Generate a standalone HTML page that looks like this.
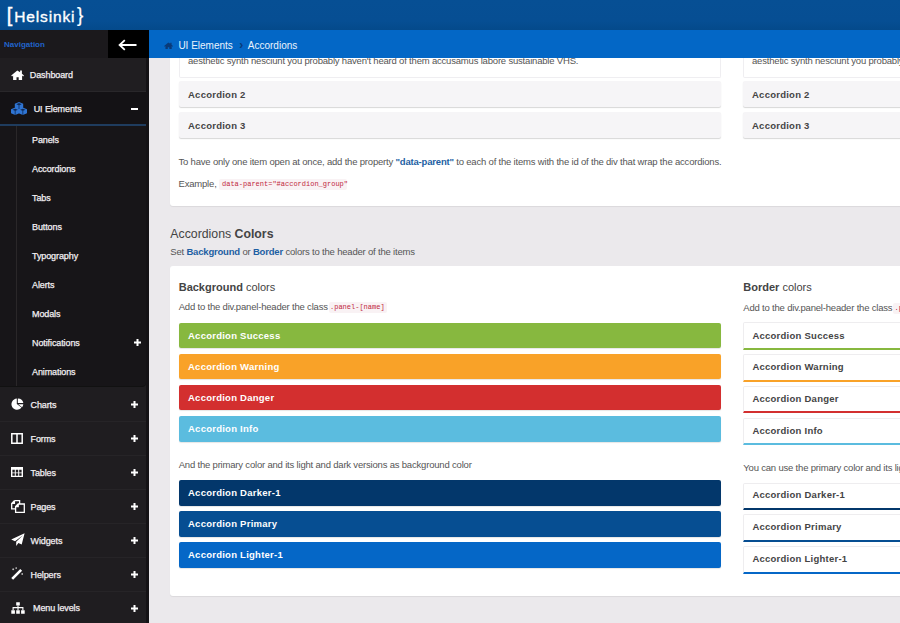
<!DOCTYPE html>
<html><head><meta charset="utf-8">
<style>
*{margin:0;padding:0;box-sizing:border-box}
html,body{width:900px;height:623px;overflow:hidden}
body{font-family:"Liberation Sans",sans-serif;background:#ebe9ec;position:relative;color:#555}
.abs{position:absolute}
.t{position:absolute;white-space:nowrap;color:#555}
.bt{letter-spacing:-0.19px}
.hb{font-weight:bold;color:#444;font-size:9.5px!important;letter-spacing:0.25px}
.mtxt{position:absolute;white-space:nowrap;color:#f2eff2;letter-spacing:-0.1px;-webkit-text-stroke:0.25px #f2eff2}
.logo{color:#fff}
.card{position:absolute;background:#fff;border-radius:3px;box-shadow:0 1px 1px rgba(0,0,0,0.07)}
.ph{position:absolute;border-radius:2px}
.gray{height:26px;background:#f6f5f7;box-shadow:0 1px 1px rgba(0,0,0,0.16)}
.code{font-family:"Liberation Mono",monospace;color:#c7254e;background:#f9f2f4;font-size:7px;padding:2px 2px;border-radius:2px}
.blue{color:#1d5fa3}
.col{box-shadow:0 1px 1px rgba(0,0,0,0.1)}
.bd{background:#fff;border:1px solid #eeedef;border-bottom:2px solid;border-radius:2px 2px 0 0}
</style></head><body>
<!-- top card -->
<div class="card" style="left:170px;top:20px;width:740px;height:186px"></div>
<div class="abs" style="left:179px;top:40px;width:542px;height:38px;background:#fff;border:1px solid #efeef1;border-top:none;border-radius:0 0 2px 2px"></div>
<div class="t bt" style="left:188px;top:55.23px;font-size:9.5px;line-height:12px;">aesthetic synth nesciunt you probably haven't heard of them accusamus labore sustainable VHS.</div>
<div class="ph gray" style="left:179px;top:81px;width:542px"></div>
<div class="t hb" style="left:188px;top:87.62px;font-size:10px;line-height:14px;">Accordion 2</div>
<div class="ph gray" style="left:179px;top:112px;width:542px"></div>
<div class="t hb" style="left:188px;top:118.92px;font-size:10px;line-height:14px;">Accordion 3</div>
<div class="abs" style="left:743px;top:40px;width:200px;height:38px;background:#fff;border:1px solid #efeef1;border-top:none;border-radius:0 0 2px 2px"></div>
<div class="t bt" style="left:752px;top:55.23px;font-size:9.5px;line-height:12px;">aesthetic synth nesciunt you probably haven't heard of them accusamus labore sustainable VHS.</div>
<div class="ph gray" style="left:743px;top:81px;width:200px"></div>
<div class="t hb" style="left:752px;top:87.62px;font-size:10px;line-height:14px;">Accordion 2</div>
<div class="ph gray" style="left:743px;top:112px;width:200px"></div>
<div class="t hb" style="left:752px;top:118.92px;font-size:10px;line-height:14px;">Accordion 3</div>
<div class="t bt" style="left:178.5px;top:155.63px;font-size:9.5px;line-height:12px;">To have only one item open at once, add the property <b class="blue">"data-parent"</b> to each of the items with the id of the div that wrap the accordions.</div>
<div class="t bt" style="left:178.5px;top:178.03px;font-size:9.5px;line-height:12px;">Example,</div>
<div class="abs" style="left:219.4px;top:179px;width:128px;height:11px;background:#f9f2f4;border-radius:2px"></div>
<div class="abs" style="left:222px;top:179px;font-family:'Liberation Mono',monospace;font-size:7px;line-height:11px;color:#c1283e;white-space:nowrap">data-parent="#accordion_group"</div>

<div class="t" style="left:170.3px;top:226.00px;font-size:12.3px;line-height:16px;color:#444">Accordions <b>Colors</b></div>
<div class="t bt" style="left:170.3px;top:245.63px;font-size:9.5px;line-height:12px;">Set <b class="blue">Background</b> or <b class="blue">Border</b> colors to the header of the items</div>

<div class="card" style="left:170px;top:266px;width:740px;height:330px"></div>
<div class="t" style="left:178.7px;top:279.51px;font-size:11px;line-height:14px;color:#444"><b>Background</b> colors</div>
<div class="t bt" style="left:178.7px;top:301.43px;font-size:9.5px;line-height:12px;">Add to the div.panel-header the class</div>
<div class="abs" style="left:328.5px;top:302px;width:58px;height:11px;background:#f9f2f4;border-radius:2px"></div>
<div class="abs" style="left:330px;top:302px;font-family:'Liberation Mono',monospace;font-size:7px;line-height:11px;color:#c1283e;white-space:nowrap">.panel-[name]</div>
<div class="t" style="left:743.3px;top:280.01px;font-size:11px;line-height:14px;color:#444"><b>Border</b> colors</div>
<div class="t bt" style="left:743.3px;top:302.03px;font-size:9.5px;line-height:12px;">Add to the div.panel-header the class</div>
<div class="abs" style="left:893px;top:302.5px;width:58px;height:11px;background:#f9f2f4;border-radius:2px"></div>
<div class="abs" style="left:894.5px;top:302.5px;font-family:'Liberation Mono',monospace;font-size:7px;line-height:11px;color:#c1283e;white-space:nowrap">.panel-[name]</div>
<div class="t bt" style="left:178.7px;top:458.63px;font-size:9.5px;line-height:12px;">And the primary color and its light and dark versions as background color</div>
<div class="t bt" style="left:743.3px;top:461.63px;font-size:9.5px;line-height:12px;">You can use the primary color and its light and dark versions as border color</div>
<div class="ph col" style="left:179px;top:322.5px;width:542px;height:25.5px;background:#87b83f"></div>
<div class="t hb" style="left:188px;top:328.52px;font-size:10px;line-height:14px;color:#fff">Accordion Success</div>
<div class="ph col" style="left:179px;top:353.7px;width:542px;height:25.5px;background:#f9a228"></div>
<div class="t hb" style="left:188px;top:359.72px;font-size:10px;line-height:14px;color:#fff">Accordion Warning</div>
<div class="ph col" style="left:179px;top:384.9px;width:542px;height:25.5px;background:#d32f2f"></div>
<div class="t hb" style="left:188px;top:390.92px;font-size:10px;line-height:14px;color:#fff">Accordion Danger</div>
<div class="ph col" style="left:179px;top:416.1px;width:542px;height:25.5px;background:#5bbcdf"></div>
<div class="t hb" style="left:188px;top:422.12px;font-size:10px;line-height:14px;color:#fff">Accordion Info</div>
<div class="ph col" style="left:179px;top:480px;width:542px;height:25.5px;background:#03376b"></div>
<div class="t hb" style="left:188px;top:486.02px;font-size:10px;line-height:14px;color:#fff">Accordion Darker-1</div>
<div class="ph col" style="left:179px;top:511.2px;width:542px;height:25.5px;background:#064e92"></div>
<div class="t hb" style="left:188px;top:517.23px;font-size:10px;line-height:14px;color:#fff">Accordion Primary</div>
<div class="ph col" style="left:179px;top:542.4px;width:542px;height:25.5px;background:#0567c7"></div>
<div class="t hb" style="left:188px;top:548.43px;font-size:10px;line-height:14px;color:#fff">Accordion Lighter-1</div>
<div class="ph bd" style="left:743px;top:322.3px;width:200px;height:27.6px;border-bottom-color:#87b83f"></div>
<div class="t hb" style="left:752.4px;top:328.52px;font-size:10px;line-height:14px;color:#444">Accordion Success</div>
<div class="ph bd" style="left:743px;top:354.1px;width:200px;height:27.6px;border-bottom-color:#f9a228"></div>
<div class="t hb" style="left:752.4px;top:360.32px;font-size:10px;line-height:14px;color:#444">Accordion Warning</div>
<div class="ph bd" style="left:743px;top:385.9px;width:200px;height:27.6px;border-bottom-color:#d32f2f"></div>
<div class="t hb" style="left:752.4px;top:392.12px;font-size:10px;line-height:14px;color:#444">Accordion Danger</div>
<div class="ph bd" style="left:743px;top:417.7px;width:200px;height:27.6px;border-bottom-color:#5bbcdf"></div>
<div class="t hb" style="left:752.4px;top:423.92px;font-size:10px;line-height:14px;color:#444">Accordion Info</div>
<div class="ph bd" style="left:743px;top:482.7px;width:200px;height:27.6px;border-bottom-color:#03376b"></div>
<div class="t hb" style="left:752.4px;top:488.32px;font-size:10px;line-height:14px;color:#444">Accordion Darker-1</div>
<div class="ph bd" style="left:743px;top:514.4px;width:200px;height:27.6px;border-bottom-color:#064e92"></div>
<div class="t hb" style="left:752.4px;top:520.02px;font-size:10px;line-height:14px;color:#444">Accordion Primary</div>
<div class="ph bd" style="left:743px;top:546.1px;width:200px;height:27.6px;border-bottom-color:#0567c7"></div>
<div class="t hb" style="left:752.4px;top:551.73px;font-size:10px;line-height:14px;color:#444">Accordion Lighter-1</div>

<!-- header & breadcrumb -->
<div class="abs" style="left:0;top:0;width:900px;height:30px;background:linear-gradient(#064f94 0%,#064e93 70%,#044a8b 100%)"></div>
<div class="abs logo" style="left:6.8px;top:3.8px;font-size:20px;line-height:22px;-webkit-text-stroke:0.4px #fff">[</div>
<div class="abs logo" style="left:14.3px;top:7px;font-size:15.5px;line-height:20px;letter-spacing:0.85px;-webkit-text-stroke:0.35px #fff">Helsinki</div>
<div class="abs logo" style="left:77.2px;top:3.8px;font-size:20px;line-height:22px;transform:scaleX(0.95);transform-origin:left;-webkit-text-stroke:0.2px #fff">}</div>

<div class="abs" style="left:0;top:30px;width:149px;height:593px;background:#1f1d20"></div>
<div class="abs" style="left:0;top:30px;width:149px;height:28px;background:#1b191c"></div>
<div class="t" style="left:4px;top:38.86px;font-size:8px;line-height:11px;font-weight:bold;color:#2163c9">Navigation</div>
<div class="abs" style="left:108px;top:30px;width:41px;height:28px;background:#000"></div>
<div class="abs" style="left:118px;top:38.5px;line-height:0"><svg width="19" height="12" viewBox="0 0 19 12"><path d="M18.5 6H2M6.8 1.2L1.6 6l5.2 4.8" fill="none" stroke="#fff" stroke-width="1.8"/></svg></div>

<div class="abs" style="left:0;top:58px;width:146px;height:34px;background:#201e21;border-bottom:1px solid #29272a"></div>
<div class="abs" style="left:10.5px;top:70.2px;line-height:0"><svg width="13" height="10" viewBox="0 0 13 10"><path d="M6.3 0.4L0.2 5.5l0.9 0.9 1-0.8V10h3.4V7.2h2.2V10h3.4V5.6l1 0.8 0.9-0.9-2.1-1.8V0.6H9.1v1.6z" fill="#fff"/></svg></div>
<div class="mtxt" style="left:29.8px;top:68.44px;font-size:9px;line-height:14px;">Dashboard</div>

<div class="abs" style="left:0;top:92px;width:146px;height:34px;background:#141215;border-bottom:2px solid #1f3c5e"></div>
<div class="abs" style="left:10.5px;top:102.4px;line-height:0"><svg width="16" height="13" viewBox="0 0 16 13"><path d="M8 0L12.2 1.6280000000000001V5.6240000000000006L8 7.4L3.8 5.6240000000000006V1.6280000000000001zM4.2 5.6L8.4 7.228V11.224L4.2 13.0L0.0 11.224V7.228zM11.8 5.6L16.0 7.228V11.224L11.8 13.0L7.6000000000000005 11.224V7.228z" fill="#2f74d2"/><path d="M8 1.0360000000000003L10.604 2.22L8 3.4040000000000004L5.396 2.22zM4.2 6.636L6.804 7.82L4.2 9.004L1.596 7.82zM11.8 6.636L14.404 7.82L11.8 9.004L9.196000000000002 7.82z" fill="#0f2c58"/><path d="M8 3.4v3.6M4.2 9v4M11.8 9v4" stroke="#0f2c58" stroke-width="0.8"/></svg></div>
<div class="mtxt" style="left:33.7px;top:102.04px;font-size:9px;line-height:14px;">UI Elements</div>
<div class="abs" style="left:131px;top:108px;width:7px;height:2px;background:#fff"></div>

<div class="abs" style="left:0;top:126px;width:146px;height:260px;background:#171518;border-radius:0 0 4px 0;box-shadow:0 1px 0 #111"></div>
<div class="abs" style="left:16px;top:126px;width:1px;height:260px;background:#2a2729"></div>
<div class="mtxt" style="left:32px;top:132.74px;font-size:9px;line-height:14px;">Panels</div>
<div class="mtxt" style="left:32px;top:161.74px;font-size:9px;line-height:14px;">Accordions</div>
<div class="mtxt" style="left:32px;top:190.74px;font-size:9px;line-height:14px;">Tabs</div>
<div class="mtxt" style="left:32px;top:219.74px;font-size:9px;line-height:14px;">Buttons</div>
<div class="mtxt" style="left:32px;top:248.74px;font-size:9px;line-height:14px;">Typography</div>
<div class="mtxt" style="left:32px;top:277.74px;font-size:9px;line-height:14px;">Alerts</div>
<div class="mtxt" style="left:32px;top:306.74px;font-size:9px;line-height:14px;">Modals</div>
<div class="mtxt" style="left:32px;top:335.74px;font-size:9px;line-height:14px;">Notifications</div>
<div class="mtxt" style="left:32px;top:364.74px;font-size:9px;line-height:14px;">Animations</div>
<div class="abs" style="left:133.5px;top:338.8px;line-height:0"><svg width="7" height="7" viewBox="0 0 7 7"><path d="M3.5 0v7M0 3.5h7" stroke="#fff" stroke-width="2"/></svg></div>
<div class="abs" style="left:10.5px;top:398.4px;line-height:0"><svg width="13" height="12" viewBox="0 0 13 12"><path d="M5.8 0.6A5.6 5.6 0 1 0 10.5 9.6L5.8 6z" fill="#fff"/><path d="M6.8 0.5A5.5 5.5 0 0 1 12.3 5H6.8z" fill="#fff"/><path d="M7.2 6.2h5.1a5.4 5.4 0 0 1-1.2 3z" fill="#fff"/></svg></div>
<div class="mtxt" style="left:30.5px;top:397.94px;font-size:9px;line-height:14px;">Charts</div>
<div class="abs" style="left:131px;top:401.0px;line-height:0"><svg width="7" height="7" viewBox="0 0 7 7"><path d="M3.5 0v7M0 3.5h7" stroke="#fff" stroke-width="2"/></svg></div>
<div class="abs" style="left:0;top:421px;width:146px;height:1px;background:#262427"></div>
<div class="abs" style="left:10.5px;top:432.9px;line-height:0"><svg width="12" height="11" viewBox="0 0 12 11"><path d="M0.8 0.8h10.4v9.4H0.8z M6 0.8v9.4" fill="none" stroke="#fff" stroke-width="1.5"/></svg></div>
<div class="mtxt" style="left:30.5px;top:431.86px;font-size:9px;line-height:14px;">Forms</div>
<div class="abs" style="left:131px;top:434.9px;line-height:0"><svg width="7" height="7" viewBox="0 0 7 7"><path d="M3.5 0v7M0 3.5h7" stroke="#fff" stroke-width="2"/></svg></div>
<div class="abs" style="left:0;top:455px;width:146px;height:1px;background:#262427"></div>
<div class="abs" style="left:10.5px;top:466.8px;line-height:0"><svg width="12" height="10" viewBox="0 0 12 10"><path d="M0 0h12v10H0z" fill="#fff"/><path d="M1.4 2.8h2.4v2.6H1.4zM4.8 2.8h2.4v2.6H4.8zM8.2 2.8h2.4v2.6H8.2zM1.4 6.2h2.4v2.5H1.4zM4.8 6.2h2.4v2.5H4.8zM8.2 6.2h2.4v2.5H8.2z" fill="#1f1d20"/></svg></div>
<div class="mtxt" style="left:30.5px;top:465.78px;font-size:9px;line-height:14px;">Tables</div>
<div class="abs" style="left:131px;top:468.8px;line-height:0"><svg width="7" height="7" viewBox="0 0 7 7"><path d="M3.5 0v7M0 3.5h7" stroke="#fff" stroke-width="2"/></svg></div>
<div class="abs" style="left:0;top:489px;width:146px;height:1px;background:#262427"></div>
<div class="abs" style="left:10.5px;top:500.4px;line-height:0"><svg width="14" height="13" viewBox="0 0 14 13"><path d="M3.4 0.7H8.6V4 M3.4 0.7L0.7 3.4v5.4h3.8 M3.4 0.7v2.7H0.7" fill="none" stroke="#fff" stroke-width="1.3"/><path d="M7.2 4H13.3V12.3H4.6V6.6z M7.2 4v2.6H4.6" fill="none" stroke="#fff" stroke-width="1.3"/></svg></div>
<div class="mtxt" style="left:30.5px;top:499.70px;font-size:9px;line-height:14px;">Pages</div>
<div class="abs" style="left:131px;top:502.8px;line-height:0"><svg width="7" height="7" viewBox="0 0 7 7"><path d="M3.5 0v7M0 3.5h7" stroke="#fff" stroke-width="2"/></svg></div>
<div class="abs" style="left:0;top:523px;width:146px;height:1px;background:#262427"></div>
<div class="abs" style="left:10.5px;top:533.4px;line-height:0"><svg width="14" height="13" viewBox="0 0 14 13"><path d="M13.6 0.2L0.2 6.6l3.8 1.6L12 2.2 5.2 8.8v4.1l2.2-2.9 3.3 1.4z" fill="#fff"/></svg></div>
<div class="mtxt" style="left:30.5px;top:533.62px;font-size:9px;line-height:14px;">Widgets</div>
<div class="abs" style="left:131px;top:536.7px;line-height:0"><svg width="7" height="7" viewBox="0 0 7 7"><path d="M3.5 0v7M0 3.5h7" stroke="#fff" stroke-width="2"/></svg></div>
<div class="abs" style="left:0;top:557px;width:146px;height:1px;background:#262427"></div>
<div class="abs" style="left:10.5px;top:567.2px;line-height:0"><svg width="13" height="13" viewBox="0 0 13 13"><path d="M1.2 11.8L10.2 2.8" stroke="#fff" stroke-width="2.6"/><path d="M2.2 1.4v1.8M1.3 2.3h1.8M5.2 0.4v1.4M4.5 1.1h1.4M11.2 6.2v1.6M10.4 7h1.6" stroke="#ddd" stroke-width="0.8"/></svg></div>
<div class="mtxt" style="left:30.5px;top:567.54px;font-size:9px;line-height:14px;">Helpers</div>
<div class="abs" style="left:131px;top:570.6px;line-height:0"><svg width="7" height="7" viewBox="0 0 7 7"><path d="M3.5 0v7M0 3.5h7" stroke="#fff" stroke-width="2"/></svg></div>
<div class="abs" style="left:0;top:591px;width:146px;height:1px;background:#262427"></div>
<div class="abs" style="left:10.5px;top:602.3px;line-height:0"><svg width="14" height="12" viewBox="0 0 14 12"><path d="M5.2 0.2h3.6v3.3H5.2zM0.3 8.2h3.6v3.5H0.3zM5.2 8.2h3.6v3.5H5.2zM10.1 8.2h3.6v3.5h-3.6z" fill="#fff"/><path d="M7 3.5v4.7M2.1 8.2V5.6h9.8v2.6" fill="none" stroke="#fff" stroke-width="1.1"/></svg></div>
<div class="mtxt" style="left:33px;top:601.46px;font-size:9px;line-height:14px;">Menu levels</div>
<div class="abs" style="left:131px;top:604.5px;line-height:0"><svg width="7" height="7" viewBox="0 0 7 7"><path d="M3.5 0v7M0 3.5h7" stroke="#fff" stroke-width="2"/></svg></div>
<div class="abs" style="left:146px;top:58px;width:3px;height:565px;background:#141215"></div>

<div class="abs" style="left:149px;top:30px;width:751px;height:28px;background:#0367c6"></div>
<div class="abs" style="left:164px;top:41.6px;line-height:0"><svg width="9" height="7.4" viewBox="0 0 13 10"><path d="M6.3 0.4L0.2 5.5l0.9 0.9 1-0.8V10h3.4V7.2h2.2V10h3.4V5.6l1 0.8 0.9-0.9-2.1-1.8V0.6H9.1v1.6z" fill="#0a3a78"/></svg></div>
<div class="t" style="left:178.4px;top:38.62px;font-size:10px;line-height:14px;color:#eaf3fd">UI Elements</div>
<div class="t" style="left:239.3px;top:38.19px;font-size:12px;line-height:14px;color:#0a3a78;font-weight:bold">›</div>
<div class="t" style="left:247.8px;top:38.62px;font-size:10px;line-height:14px;color:#eaf3fd">Accordions</div>
</body></html>
